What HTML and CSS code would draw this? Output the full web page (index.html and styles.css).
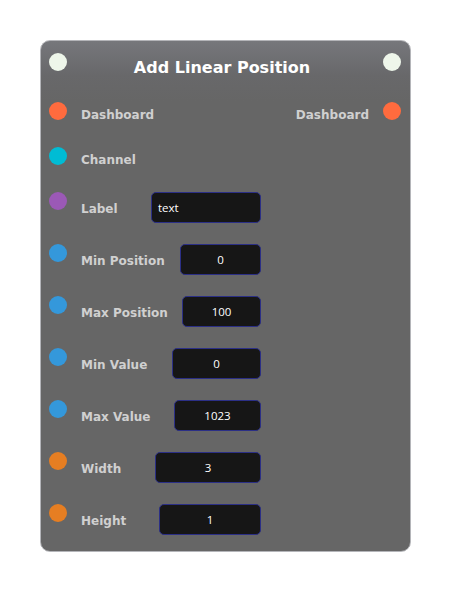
FILE: index.html
```html
<!DOCTYPE html>
<html>
<head>
<meta charset="utf-8">
<link rel="stylesheet" href="styles.css">
</head>
<body>
<div class="node">
  <div class="header">
    <span class="dot dot-white"></span>
    <span class="title">Add Linear Position</span>
    <span class="dot dot-white"></span>
  </div>
  <div class="row">
    <span class="dot dot-red"></span>
    <span class="label grow">Dashboard</span>
    <span class="label out">Dashboard</span>
    <span class="dot dot-red"></span>
  </div>
  <div class="row">
    <span class="dot dot-cyan"></span>
    <span class="label">Channel</span>
  </div>
  <div class="row field">
    <span class="dot dot-purple"></span>
    <div class="pair">
      <span class="label">Label</span>
      <div class="input left" style="width:110px">text</div>
    </div>
  </div>
  <div class="row field">
    <span class="dot dot-blue"></span>
    <div class="pair">
      <span class="label">Min Position</span>
      <div class="input" style="width:81px">0</div>
    </div>
  </div>
  <div class="row field">
    <span class="dot dot-blue"></span>
    <div class="pair">
      <span class="label">Max Position</span>
      <div class="input" style="width:79px">100</div>
    </div>
  </div>
  <div class="row field">
    <span class="dot dot-blue"></span>
    <div class="pair">
      <span class="label">Min Value</span>
      <div class="input" style="width:89px">0</div>
    </div>
  </div>
  <div class="row field">
    <span class="dot dot-blue"></span>
    <div class="pair">
      <span class="label">Max Value</span>
      <div class="input" style="width:87px">1023</div>
    </div>
  </div>
  <div class="row field">
    <span class="dot dot-orange"></span>
    <div class="pair">
      <span class="label">Width</span>
      <div class="input" style="width:106px">3</div>
    </div>
  </div>
  <div class="row field last">
    <span class="dot dot-orange"></span>
    <div class="pair">
      <span class="label">Height</span>
      <div class="input" style="width:102px">1</div>
    </div>
  </div>
</div>
</body>
</html>
```
FILE: styles.css
```css
html, body {
  margin: 0;
  padding: 0;
  background: #ffffff;
}
body {
  padding: 40px 0 0 40px;
  font-family: "DejaVu Sans", Verdana, sans-serif;
}
.node {
  box-sizing: border-box;
  width: 371px;
  height: 512px;
  border: 1px solid #b4b5b9;
  border-radius: 10px;
  background: linear-gradient(to bottom, #76777b 0px, #68686a 34px, #666666 60px, #666666 100%);
  padding: 12px 9px 0 8px;
  display: flex;
  flex-direction: column;
}
.header {
  display: flex;
  align-items: flex-start;
  height: 28px;
  margin-bottom: 21px;
}
.title {
  flex: 1;
  text-align: center;
  color: #ffffff;
  font-weight: bold;
  font-size: 16px;
  line-height: 30px;
  padding-right: 6px;
}
.dot {
  flex: none;
  width: 18px;
  height: 18px;
  border-radius: 50%;
}
.dot-white { background: #eef6ea; }
.dot-red { background: #ff6b3e; }
.dot-cyan { background: #00bcd4; }
.dot-purple { background: #9b59b6; }
.dot-blue { background: #3498db; }
.dot-orange { background: #e67e22; }
.row {
  display: flex;
  align-items: flex-start;
  height: 24px;
  margin-bottom: 21px;
}
.row.field {
  height: 31px;
}
.row.last {
  margin-bottom: 0;
}
.label {
  color: #d0d0d0;
  font-weight: bold;
  font-size: 12px;
  line-height: 24px;
  margin-left: 14px;
  padding-top: 1px;
  white-space: nowrap;
}
.grow {
  flex: 1;
}
.label.out {
  margin-left: 0;
  margin-right: 14px;
}
.pair {
  display: flex;
  align-items: center;
  justify-content: space-between;
  width: 194px;
  height: 31px;
}
.pair .label {
  line-height: 31px;
  padding-top: 3px;
}
.input {
  box-sizing: border-box;
  height: 31px;
  border: 1px solid #2b2f86;
  border-radius: 5px;
  background: #161616;
  color: #ffffff;
  font-family: "Open Sans", "Noto Sans", sans-serif;
  font-size: 11.5px;
  line-height: 29px;
  text-align: center;
}
.input.left {
  text-align: left;
  padding-left: 6px;
}
```
